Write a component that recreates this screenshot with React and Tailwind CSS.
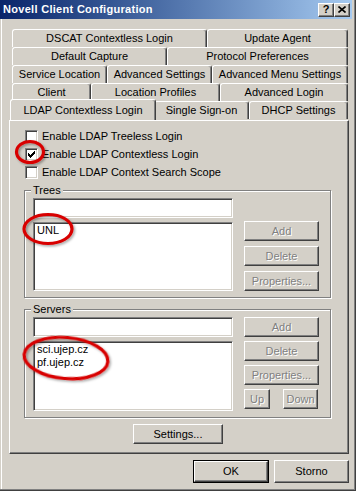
import React from "react";

const raised =
  "border-t border-l border-t-white border-l-white border-b border-r border-b-[#404040] border-r-[#404040] shadow-[inset_-1px_-1px_0_#808080]";
const sunken =
  "border-t border-l border-t-[#808080] border-l-[#808080] border-b border-r border-b-white border-r-white shadow-[inset_1px_1px_0_#404040,inset_-1px_-1px_0_#d4d0c8]";
const disabledText = "text-[#808080] [text-shadow:1px_1px_0_#ffffff]";

const ROWS = [
  [
    ["DSCAT Contextless Login", "w-[195px]"],
    ["Update Agent", "w-[141px]"],
  ],
  [
    ["Default Capture", "w-[155px]"],
    ["Protocol Preferences", "w-[181px]"],
  ],
  [
    ["Service Location", "w-[95px]"],
    ["Advanced Settings", "w-[105px]"],
    ["Advanced Menu Settings", "w-[136px]"],
  ],
  [
    ["Client", "w-[79px]"],
    ["Location Profiles", "w-[129px]"],
    ["Advanced Login", "w-[128px]"],
  ],
];

function Tab({ label, w }) {
  return (
    <div
      className={`${w} h-[18px] flex items-center justify-center border-t border-l border-r border-t-white border-l-white border-r-[#404040] rounded-t-[3px] shadow-[inset_-1px_0_0_#808080]`}
    >
      {label}
    </div>
  );
}

function Button({ children, w, disabled, className = "" }) {
  return (
    <div
      className={`${w} h-[20px] flex items-center justify-center ${raised} ${
        disabled ? disabledText : "text-black"
      } ${className}`}
    >
      {children}
    </div>
  );
}

function Checkbox({ label, checked }) {
  return (
    <div className="h-[18px] flex items-center">
      <div className={`w-[13px] h-[13px] bg-white ${sunken} relative`}>
        {checked && (
          <svg width="7" height="7" viewBox="0 0 7 7" className="absolute left-[2px] top-[2px]">
            <path
              d="M0 2h1v3H0zM1 3h1v3H1zM2 4h1v3H2zM3 3h1v3H3zM4 2h1v3H4zM5 1h1v3H5zM6 0h1v3H6z"
              fill="#000"
            />
          </svg>
        )}
      </div>
      <span className="ml-[4px]">{label}</span>
    </div>
  );
}

function Group({ title, children, className = "" }) {
  return (
    <div
      className={`w-[307px] border border-[#808080] shadow-[inset_1px_1px_0_#ffffff,1px_1px_0_#ffffff] ${className}`}
    >
      <div className="-mt-[7px] ml-[6px] px-[2px] w-fit h-[13px] leading-[13px] bg-[#d4d0c8]">
        {title}
      </div>
      {children}
    </div>
  );
}

function ListBox({ items, h }) {
  return (
    <div className={`w-[200px] ${h} bg-white ${sunken} pl-[3px] pt-[1px]`}>
      {items.map((t) => (
        <div key={t} className="h-[13px] leading-[13px]">
          {t}
        </div>
      ))}
    </div>
  );
}

export default function App() {
  return (
    <div className="relative w-[356px] h-[491px] bg-[#d4d0c8] border-r border-b border-[#404040] font-['Liberation_Sans',Arial,sans-serif] text-[11px] text-black overflow-hidden">
      <div className="h-full border-r border-b border-[#808080] flex flex-col">
        {/* Title bar */}
        <div className="h-[19px] mr-[2px] flex items-center bg-gradient-to-r from-[#0a246a] to-[#a6caf0]">
          <span className="ml-[3px] font-bold text-white tracking-[0.3px]">Novell Client Configuration</span>
          <div className="ml-auto mr-[2px] flex">
            <div className={`w-[16px] h-[14px] bg-[#d4d0c8] ${raised} flex items-center justify-center font-bold text-[11px] leading-none`}>
              ?
            </div>
            <div className={`w-[16px] h-[14px] bg-[#d4d0c8] ${raised} flex items-center justify-center`}>
              <svg width="8" height="7" viewBox="0 0 8 7">
                <path d="M0.5 0.5L7.5 6.5M7.5 0.5L0.5 6.5" stroke="#000" strokeWidth="1.6" />
              </svg>
            </div>
          </div>
        </div>

        <div className="flex-1 ml-[1px] border-l border-white">
          {/* Tabs */}
          <div className="mt-[10px] ml-[10px]">
            {ROWS.map((row, i) => (
              <div key={i} className="flex">
                {row.map(([label, w]) => (
                  <Tab key={label} label={label} w={w} />
                ))}
              </div>
            ))}
            <div className="flex">
              <div className="relative z-10 w-[146px] h-[21px] -mt-[2px] -mx-[2px] flex justify-center pt-[2px] bg-[#d4d0c8] border-t border-l border-r border-t-white border-l-white border-r-[#404040] rounded-t-[3px] shadow-[inset_-1px_0_0_#808080]">
                LDAP Contextless Login
              </div>
              <Tab label="Single Sign-on" w="w-[95px]" />
              <Tab label="DHCP Settings" w="w-[99px]" />
            </div>
          </div>

          {/* Panel */}
          <div className={`ml-[7px] w-[340px] h-[334px] ${raised}`}>
            <div className="mt-[6px] ml-[15px]">
              <Checkbox label="Enable LDAP Treeless Login" />
              <Checkbox label="Enable LDAP Contextless Login" checked />
              <Checkbox label="Enable LDAP Context Search Scope" />
            </div>

            <Group title="Trees" className="mt-[9px] ml-[14px]">
              <div className="flex mt-[1px] ml-[8px] pb-[6px]">
                <div className="flex flex-col gap-[4px]">
                  <div className={`w-[200px] h-[20px] bg-white ${sunken}`} />
                  <ListBox items={["UNL"]} h="h-[69px]" />
                </div>
                <div className="ml-[11px] mt-[23px] flex flex-col gap-[5px]">
                  <Button w="w-[75px]" disabled>Add</Button>
                  <Button w="w-[75px]" disabled>Delete</Button>
                  <Button w="w-[75px]" disabled>Properties...</Button>
                </div>
              </div>
            </Group>

            <Group title="Servers" className="mt-[11px] ml-[14px]">
              <div className="flex mt-[1px] ml-[8px] pb-[6px]">
                <div className="flex flex-col gap-[4px]">
                  <div className={`w-[200px] h-[20px] bg-white ${sunken}`} />
                  <ListBox items={["sci.ujep.cz", "pf.ujep.cz"]} h="h-[70px]" />
                </div>
                <div className="ml-[11px] flex flex-col gap-[4px]">
                  <Button w="w-[75px]" disabled>Add</Button>
                  <Button w="w-[75px]" disabled>Delete</Button>
                  <Button w="w-[75px]" disabled>Properties...</Button>
                  <div className="flex">
                    <Button w="w-[26px]" disabled>Up</Button>
                    <Button w="w-[35px]" disabled className="ml-[13px]">Down</Button>
                  </div>
                </div>
              </div>
            </Group>

            <Button w="w-[90px]" className="mt-[6px] ml-[123px]">Settings...</Button>
          </div>

          {/* Dialog buttons */}
          <div className="flex mt-[6px] ml-[191px] gap-[5px]">
            <div className="w-[76px] h-[23px] border border-black">
              <div className={`w-full h-full flex items-center justify-center ${raised}`}>OK</div>
            </div>
            <div className={`w-[75px] h-[23px] flex items-center justify-center ${raised}`}>Storno</div>
          </div>
        </div>
      </div>

      {/* Red annotation rings */}
      <svg className="absolute inset-0 pointer-events-none" width="356" height="491">
        <defs>
          <filter id="sh" x="-20%" y="-20%" width="140%" height="140%">
            <feDropShadow dx="1.5" dy="1.5" stdDeviation="1.2" floodColor="#000" floodOpacity="0.35" />
          </filter>
        </defs>
        <g fill="none" stroke="#d80000" strokeWidth="3.2" filter="url(#sh)">
          <ellipse cx="30" cy="152" rx="13.5" ry="10.5" />
          <ellipse cx="48" cy="229" rx="24" ry="14.5" />
          <ellipse cx="66" cy="358" rx="42" ry="20.5" transform="rotate(5 66 358)" />
        </g>
      </svg>
    </div>
  );
}
